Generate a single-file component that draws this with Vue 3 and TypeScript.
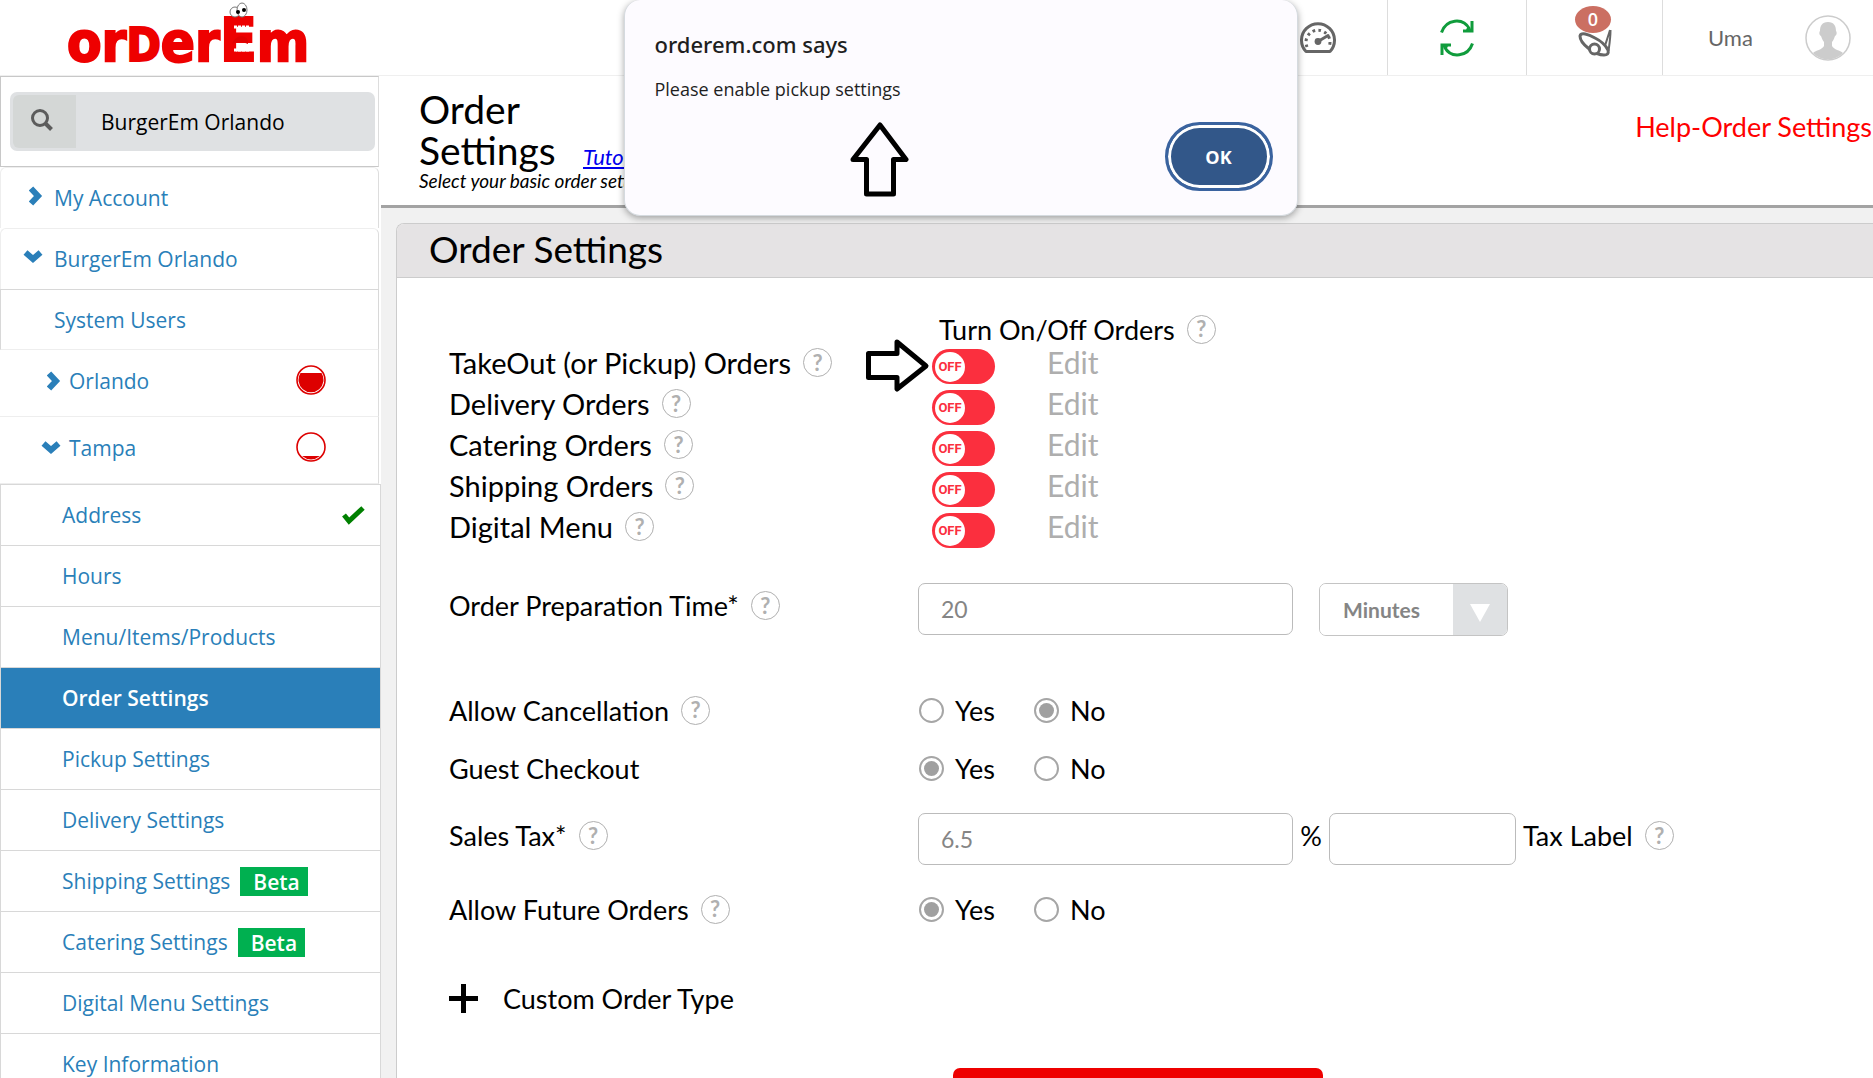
<script setup lang="ts">
import { ref } from 'vue'

interface SidebarItem {
  label: string
  active?: boolean
  done?: boolean
  beta?: boolean
}

interface OrderKind {
  label: string
  enabled: boolean
  pointed?: boolean
}

const siteQuery = ref('BurgerEm Orlando')
const prepTime = ref('20')
const prepUnit = ref('Minutes')
const salesTax = ref('6.5')
const taxLabel = ref('')
const allowCancellation = ref('No')
const guestCheckout = ref('Yes')
const allowFuture = ref('Yes')

const items: SidebarItem[] = [
  { label: 'Address', done: true },
  { label: 'Hours' },
  { label: 'Menu/Items/Products' },
  { label: 'Order Settings', active: true },
  { label: 'Pickup Settings' },
  { label: 'Delivery Settings' },
  { label: 'Shipping Settings', beta: true },
  { label: 'Catering Settings', beta: true },
  { label: 'Digital Menu Settings' },
  { label: 'Key Information' },
]

const kinds = ref<OrderKind[]>([
  { label: 'TakeOut (or Pickup) Orders', enabled: false, pointed: true },
  { label: 'Delivery Orders', enabled: false },
  { label: 'Catering Orders', enabled: false },
  { label: 'Shipping Orders', enabled: false },
  { label: 'Digital Menu', enabled: false },
])

const choices = ['Yes', 'No']
</script>

<template>
  <div class="page">
    <header class="topbar">
      <a class="logo" href="#" aria-label="orderEm home">
        <svg width="254" height="75" viewBox="60 0 254 75">
          <text x="67" y="61" class="wordmark">or<tspan class="cap-d">D</tspan>er<tspan class="cap-e">E</tspan>m</text>
          <path d="M234 27h16M234 50h16" stroke="#fff" stroke-width="3" stroke-dasharray="3 1" />
          <path d="M232 44q3-8 10-8q7 1 6 8q-8-4-16 0z" fill="#e00000" />
          <g fill="#fff" stroke="#777" stroke-width="1">
            <ellipse cx="235" cy="12" rx="5" ry="5" />
            <ellipse cx="242" cy="10" rx="5" ry="7" />
          </g>
          <circle cx="238" cy="12" r="2" /><circle cx="244" cy="10" r="2" />
        </svg>
      </a>
      <nav class="tools" aria-label="Tools">
        <button class="tool gauge" type="button" aria-label="Dashboard">
          <svg width="36" height="32" viewBox="0 0 36 32" fill="none" stroke="#666">
            <path d="M6 29.500A16.500 16.500 0 1 1 30 29.500Z" stroke-width="3" stroke-linejoin="round" />
            <path d="M7 25a12 12 0 1 1 22 0" stroke-width="3" stroke-dasharray="2.600 3.400" />
            <path d="M18 19.500l10-6" stroke-width="3" stroke-linecap="round" />
            <circle cx="18" cy="19.500" r="3.400" fill="#666" stroke="none" />
          </svg>
        </button>
        <button class="tool refresh" type="button" aria-label="Refresh">
          <svg width="34" height="38" viewBox="0 0 34 38" fill="none" stroke="#109c3c" stroke-width="3">
            <path d="M1.500 13.500C6 0 23-2 29.500 10" />
            <path d="M32 2v10H23M31 12l-4-3" />
            <path d="M32.500 24.500C28 38 11 40 4.500 28" />
            <path d="M2 36V26H11M3 26l4 3" />
          </svg>
        </button>
        <button class="tool bell" type="button" aria-label="Notifications">
          <svg width="34" height="28" viewBox="0 0 34 28" fill="none" stroke="#666" stroke-width="3">
            <path d="M2 7c1-4 8-2 15 2 6 3 11 8 13 12 1 4-1 5-4 5C17 26 2 15 2 7z" />
            <path d="M32 1c-2 7-4 12-5 16M32.500 1c0 8-1 14-2 21" stroke-width="2" />
            <circle cx="16.500" cy="20" r="5" fill="#fff" />
          </svg>
          <span class="count">0</span>
        </button>
        <button class="tool user" type="button">
          <span>Uma</span>
          <svg width="46" height="46" viewBox="0 0 46 46">
            <circle cx="23" cy="23" r="22" fill="#fff" stroke="#ccc" stroke-width="1.500" />
            <path d="M23 7c6 0 8 4 8 9 1 1 1 4-1 5-1 3-2 5-3 6v4c2 4 8 4 11 7a21 21 0 0 1-30 0c3-3 9-3 11-7v-4c-1-1-2-3-3-6-2-1-2-4-1-5 0-5 2-9 8-9z" fill="#ccc" />
          </svg>
        </button>
      </nav>
    </header>

    <div class="columns">
      <aside class="sidebar">
        <div class="search-panel">
          <div class="search">
            <label class="search-icon" for="site-search" aria-label="Search location">
              <svg width="22" height="22" viewBox="0 0 22 22" fill="none" stroke="#5c5c5c">
                <circle cx="9" cy="9" r="7.500" stroke-width="3" />
                <path d="M14 14l6.500 6.500" stroke-width="4" />
              </svg>
            </label>
            <input id="site-search" v-model="siteQuery" type="text" />
          </div>
        </div>
        <a class="group top" href="#">
          <span class="chev"><svg width="14" height="20" viewBox="0 0 14 20"><path d="M2 2.500L9 10L2 17.500" /></svg></span>My Account
        </a>
        <a class="group top" href="#">
          <span class="chev"><svg width="20" height="14" viewBox="0 0 20 14"><path d="M2.500 2.500L10 9L17.500 2.500" /></svg></span>BurgerEm Orlando
        </a>
        <a class="group plain" href="#">System Users</a>
        <a class="group place" href="#">
          <span class="chev"><svg width="14" height="20" viewBox="0 0 14 20"><path d="M2 2.500L9 10L2 17.500" /></svg></span>Orlando
          <svg class="level" width="30" height="30" viewBox="0 0 30 30">
            <circle cx="15" cy="15" r="14" fill="#fff" stroke="#d00" stroke-width="1.600" />
            <path d="M4.500 8h21A12.500 12.500 0 1 1 4.500 8z" fill="#d00" />
          </svg>
        </a>
        <a class="group place" href="#">
          <span class="chev"><svg width="20" height="14" viewBox="0 0 20 14"><path d="M2.500 2.500L10 9L17.500 2.500" /></svg></span>Tampa
          <svg class="level" width="30" height="30" viewBox="0 0 30 30">
            <circle cx="15" cy="15" r="14" fill="#fff" stroke="#d00" stroke-width="1.600" />
            <path d="M6 24h18Q15 31 6 24z" fill="#d00" />
          </svg>
        </a>
        <ul class="items">
          <li v-for="item in items" :key="item.label">
            <a class="item" :class="{ active: item.active }" href="#">
              {{ item.label }}
              <span v-if="item.beta" class="beta">Beta</span>
              <svg v-if="item.done" class="check" width="24" height="20" viewBox="0 0 24 20">
                <path d="M2 10l5 6L21 3" fill="none" stroke="#008000" stroke-width="5" />
              </svg>
            </a>
          </li>
        </ul>
      </aside>

      <main class="main">
        <div class="titlebar">
          <div>
            <div class="heading">
              <h1>Order Settings</h1>
              <a class="tutorial" href="#">Tutorial</a>
            </div>
            <p>Select your basic order settings</p>
          </div>
          <a class="help-link" href="#">Help-Order Settings</a>
        </div>

        <section class="card">
          <h2>Order Settings</h2>
          <form class="form" @submit.prevent>
            <div class="row switch-head">
              <span class="field title">Turn On/Off Orders <button class="hint" type="button">?</button></span>
            </div>
            <div v-for="(kind, i) in kinds" :key="kind.label" class="row kind">
              <div class="label">
                <label :for="'kind-' + i">{{ kind.label }}</label>
                <button class="hint" type="button">?</button>
                <svg v-if="kind.pointed" class="pointer" width="64" height="54" viewBox="0 0 64 54">
                  <path d="M2.500 14.500H31V3L60 27L31 50V38.500H2.500Z" fill="#fff" stroke="#000" stroke-width="5" stroke-linejoin="round" />
                </svg>
              </div>
              <div class="field">
                <span class="toggle">
                  <input :id="'kind-' + i" v-model="kind.enabled" type="checkbox" />
                  <span class="knob">{{ kind.enabled ? 'ON' : 'OFF' }}</span>
                </span>
                <a class="edit" href="#">Edit</a>
              </div>
            </div>

            <div class="row prep">
              <div class="label raised"><label for="prep">Order Preparation Time*</label> <button class="hint" type="button">?</button></div>
              <div class="field">
                <input id="prep" v-model="prepTime" class="text wide" type="text" />
                <span class="select">
                  <select v-model="prepUnit" aria-label="Preparation time unit">
                    <option>Minutes</option>
                    <option>Hours</option>
                  </select>
                  <span class="arrow"><svg width="20" height="18" viewBox="0 0 20 18"><path d="M0 0H20L10 18Z" fill="#fff" /></svg></span>
                </span>
              </div>
            </div>

            <div class="row cancel">
              <div class="label">Allow Cancellation <button class="hint" type="button">?</button></div>
              <div class="field" role="radiogroup" aria-label="Allow Cancellation">
                <label v-for="c in choices" :key="c" class="radio"><input v-model="allowCancellation" type="radio" name="cancel" :value="c" />{{ c }}</label>
              </div>
            </div>
            <div class="row guest">
              <div class="label">Guest Checkout</div>
              <div class="field" role="radiogroup" aria-label="Guest Checkout">
                <label v-for="c in choices" :key="c" class="radio"><input v-model="guestCheckout" type="radio" name="guest" :value="c" />{{ c }}</label>
              </div>
            </div>
            <div class="row tax">
              <div class="label raised"><label for="tax">Sales Tax*</label> <button class="hint" type="button">?</button></div>
              <div class="field">
                <input id="tax" v-model="salesTax" class="text wide" type="text" />
                <span class="percent raised">%</span>
                <input id="tax-label" v-model="taxLabel" class="text short" type="text" />
                <span class="tax-label raised"><label for="tax-label">Tax Label</label> <button class="hint" type="button">?</button></span>
              </div>
            </div>
            <div class="row future">
              <div class="label">Allow Future Orders <button class="hint" type="button">?</button></div>
              <div class="field" role="radiogroup" aria-label="Allow Future Orders">
                <label v-for="c in choices" :key="c" class="radio"><input v-model="allowFuture" type="radio" name="future" :value="c" />{{ c }}</label>
              </div>
            </div>

            <button class="custom" type="button">
              <svg width="29" height="29" viewBox="0 0 29 29"><path d="M14.500 0V29M0 14.500H29" stroke="#000" stroke-width="5" /></svg>
              Custom Order Type
            </button>
            <button class="save" type="submit" aria-label="Save"></button>
          </form>
        </section>
      </main>
    </div>

    <div class="alert" role="alertdialog" aria-labelledby="alert-title" aria-describedby="alert-text">
      <h3 id="alert-title">orderem.com says</h3>
      <p id="alert-text">Please enable pickup settings</p>
      <button class="ok" type="button">OK</button>
      <svg class="up" width="60" height="76" viewBox="0 0 60 76">
        <path d="M30 3L56 37.500H43.500V72H16.500V37.500H3Z" fill="none" stroke="#000" stroke-width="5" stroke-linejoin="round" />
      </svg>
    </div>
  </div>
</template>

<style>
body {
  margin: 0;
}
</style>

<style scoped>
* {
  box-sizing: border-box;
}

.page {
  position: relative;
  display: flex;
  flex-direction: column;
  height: 100vh;
  overflow: hidden;
  background: #fff;
  color: #000;
  font-family: Lato, sans-serif;
  font-size: 27px;
}

a {
  text-decoration: none;
}

button {
  padding: 0;
  border: 0;
  background: none;
  color: inherit;
  font: inherit;
}

svg {
  display: block;
  flex: none;
}

h1,
h2,
h3,
p {
  margin: 0;
  font-weight: 400;
}

.topbar {
  flex: none;
  display: flex;
  justify-content: space-between;
  height: 76px;
  border-bottom: 1px solid #efefef;
}

.logo {
  padding-left: 60px;
}

.wordmark {
  fill: #ee0000;
  stroke: #ee0000;
  stroke-width: 2px;
  font-family: "DejaVu Sans Condensed", "DejaVu Sans", sans-serif;
  font-size: 56px;
  font-weight: 700;
}

.cap-d {
  font-size: 46px;
}

.cap-e {
  font-size: 60px;
}

.tools {
  display: flex;
}

.tool {
  position: relative;
  display: flex;
  align-items: center;
  justify-content: center;
  border-right: 1px solid #ddd;
}

.gauge {
  width: 140px;
}

.refresh {
  width: 139px;
}

.bell {
  width: 136px;
  padding-top: 10px;
}

.count {
  position: absolute;
  top: 6px;
  left: 48px;
  width: 36px;
  height: 27px;
  border-radius: 50%;
  background: #cb6f62;
  color: #fff;
  font-family: "Open Sans", sans-serif;
  font-size: 18px;
  font-weight: 600;
  line-height: 26px;
}

.user {
  width: 210px;
  justify-content: space-between;
  padding: 0 22px 0 45px;
  border-right: 0;
  color: #666;
  font-size: 22px;
}

.columns {
  flex: 1;
  display: flex;
  align-items: flex-start;
  min-height: 0;
}

.sidebar {
  flex: none;
  width: 381px;
  background: #fff;
  font-family: "Open Sans", sans-serif;
  font-size: 21px;
}

.search-panel {
  margin-right: 2px;
  padding: 15px 3px 15px 9px;
  border: 1px solid #c8c8c8;
  border-right-color: #ddd;
}

.search {
  display: flex;
  height: 59px;
  padding: 3px;
  border-radius: 7px;
  background: #dfe1e3;
}

.search-icon {
  display: flex;
  align-items: center;
  justify-content: center;
  width: 63px;
  padding: 0 6px 4px 0;
  border-radius: 6px 0 0 6px;
  background: #d4d7d6;
}

.search input {
  flex: 1;
  min-width: 0;
  padding: 0 0 0 25px;
  border: 0;
  outline: 0;
  background: none;
  color: #000;
  font: inherit;
}

.group {
  position: relative;
  display: flex;
  align-items: center;
  margin-right: 2px;
  border: 1px solid #eee;
  border-right-color: #ddd;
  color: #2a7fb9;
}

.top {
  height: 61px;
  border-bottom: 0;
  border-radius: 6px 6px 0 0;
}

.plain {
  height: 61px;
  padding-left: 53px;
  border-color: #d8d8d8;
  border-bottom-color: #eee;
}

.place {
  height: 67px;
  padding-bottom: 5px;
  border-width: 0 1px 1px 0;
}

.chev {
  display: flex;
  justify-content: flex-end;
  width: 42px;
  margin-right: 11px;
  padding-bottom: 5px;
}

.place .chev {
  width: 61px;
  margin-right: 8px;
  padding-bottom: 0;
}

.chev path {
  fill: none;
  stroke: #2a7fb9;
  stroke-width: 6px;
}

.level {
  position: absolute;
  top: 15px;
  right: 52px;
}

.items {
  margin: 0;
  padding: 0;
  list-style: none;
}

.item {
  display: flex;
  align-items: center;
  height: 61px;
  padding: 0 14px 0 61px;
  border: 1px solid #d8d8d8;
  border-bottom: 0;
  color: #2a7fb9;
}

.item.active {
  background: #2a7fb9;
  color: #fff;
  font-weight: 600;
}

.beta {
  height: 29px;
  margin-left: 10px;
  padding: 0 8px 0 13px;
  background: #00b050;
  color: #fff;
  font-weight: 600;
  line-height: 30px;
}

.check {
  margin-left: auto;
}

.main {
  flex: 1;
  min-width: 0;
  background: #f1f1f1;
}

.titlebar {
  display: flex;
  justify-content: space-between;
  height: 132px;
  padding: 13px 1px 0 38px;
  border-bottom: 3px solid #a3a3a3;
  background: #fff;
}

.heading {
  display: flex;
  align-items: last baseline;
}

h1 {
  width: 164px;
  font-size: 39px;
  line-height: 41px;
}

.tutorial {
  color: #0000ee;
  font-size: 22px;
  font-style: italic;
  text-decoration: underline;
}

.titlebar p {
  font-size: 19px;
  font-style: italic;
  line-height: 20px;
}

.help-link {
  padding-top: 21px;
  color: #f00;
}

.card {
  margin: 15px 0 0 15px;
  border: 1px solid #ccc;
  border-right: 0;
  border-radius: 8px 0 0 0;
  background: #fff;
  overflow: hidden;
}

h2 {
  height: 54px;
  padding-left: 32px;
  border-bottom: 1px solid #ccc;
  background: #e5e3e4;
  font-size: 37px;
  line-height: 50px;
}

.form {
  padding: 36px 0 0 52px;
}

.row {
  display: flex;
  align-items: center;
}

.label {
  position: relative;
  display: flex;
  align-items: center;
  gap: 12px;
  width: 469px;
}

.raised {
  padding-bottom: 7px;
}

.field {
  display: flex;
  align-items: center;
}

.hint {
  flex: none;
  width: 29px;
  height: 29px;
  border: 1px solid #b0b0b0;
  border-radius: 50%;
  color: #b0b0b0;
  font-size: 22px;
  font-weight: 700;
  line-height: 26px;
}

.switch-head {
  height: 30px;
  margin-bottom: 2px;
  padding-left: 490px;
}

.title {
  gap: 12px;
}

.kind {
  height: 41px;
}

.kind .label {
  width: 483px;
  padding-bottom: 8px;
  font-size: 29px;
}

.pointer {
  position: absolute;
  top: -6px;
  left: 417px;
}

.toggle {
  position: relative;
  display: flex;
  align-items: center;
  width: 63px;
  height: 35px;
  padding-left: 3px;
  border-radius: 18px;
  background: #fb2f3e;
}

.toggle input {
  position: absolute;
  inset: 0;
  width: 100%;
  height: 100%;
  margin: 0;
  opacity: 0;
}

.knob {
  width: 30px;
  height: 30px;
  border-radius: 50%;
  background: #fff;
  color: #fb2f3e;
  font-family: Roboto, sans-serif;
  font-size: 13px;
  font-weight: 700;
  line-height: 30px;
  text-align: center;
}

.edit {
  margin-left: 52px;
  padding-bottom: 9px;
  color: #aeaeae;
  font-size: 30px;
  line-height: 32px;
}

.prep {
  height: 54px;
  margin-top: 31px;
}

.text {
  height: 52px;
  padding: 0 22px;
  border: 1px solid #bbb;
  border-radius: 7px;
  outline: 0;
  background: #fff;
  color: #858585;
  font: inherit;
  font-size: 23px;
}

.wide {
  width: 375px;
}

.short {
  width: 187px;
}

.select {
  display: flex;
  width: 189px;
  height: 53px;
  margin-left: 26px;
  border: 1px solid #c4c4c4;
  border-radius: 7px;
  overflow: hidden;
}

.select select {
  flex: 1;
  min-width: 0;
  padding: 0 0 0 23px;
  border: 0;
  outline: 0;
  appearance: none;
  background: #fff;
  color: #858585;
  font: inherit;
  font-size: 21px;
  font-weight: 700;
}

.arrow {
  display: flex;
  align-items: center;
  justify-content: center;
  width: 54px;
  padding-top: 7px;
  background: #dfe1e3;
}

.cancel {
  height: 58px;
  margin-top: 45px;
}

.guest {
  height: 58px;
}

.tax {
  height: 54px;
  margin-top: 15px;
}

.future {
  height: 58px;
  margin-top: 14px;
}

.radio {
  display: flex;
  align-items: center;
  width: 115px;
}

.radio input {
  width: 25px;
  height: 25px;
  margin: 0 11px 0 1px;
  padding: 3px;
  border: 2px solid #a6a6a6;
  border-radius: 50%;
  appearance: none;
  background: #fff;
}

.radio input:checked {
  background: #a0a0a0 content-box;
}

.percent {
  width: 36px;
  text-align: center;
}

.tax-label {
  display: flex;
  align-items: center;
  gap: 12px;
  margin-left: 7px;
}

.custom {
  display: flex;
  align-items: center;
  gap: 25px;
  height: 34px;
  margin-top: 43px;
}

.save {
  display: block;
  width: 370px;
  height: 60px;
  margin: 53px 0 40px 504px;
  border-radius: 7px;
  background: #ee0000;
}

.alert {
  position: absolute;
  top: 0;
  left: 50%;
  width: 674px;
  height: 216px;
  margin-left: -313px;
  padding: 28px 24px 24px 30px;
  border: 1px solid #d5dadf;
  border-top: 0;
  border-radius: 16px;
  background: #fdfbff;
  box-shadow: 0 2px 7px rgba(0, 0, 0, 0.35);
  color: #1f1f1f;
  font-family: "Open Sans", sans-serif;
}

.alert h3 {
  font-family: "Noto Sans", sans-serif;
  font-size: 22px;
  font-weight: 500;
  line-height: 32px;
}

.alert p {
  margin-top: 15px;
  font-size: 18px;
  line-height: 28px;
}

.ok {
  position: absolute;
  right: 24px;
  bottom: 24px;
  width: 108px;
  height: 69px;
  border: 3px solid #3a639f;
  border-radius: 35px;
  background: #325789;
  box-shadow: inset 0 0 0 3px #fff;
  color: #fff;
  font-size: 18px;
  font-weight: 700;
}

.up {
  position: absolute;
  top: 122px;
  left: 225px;
}
</style>
